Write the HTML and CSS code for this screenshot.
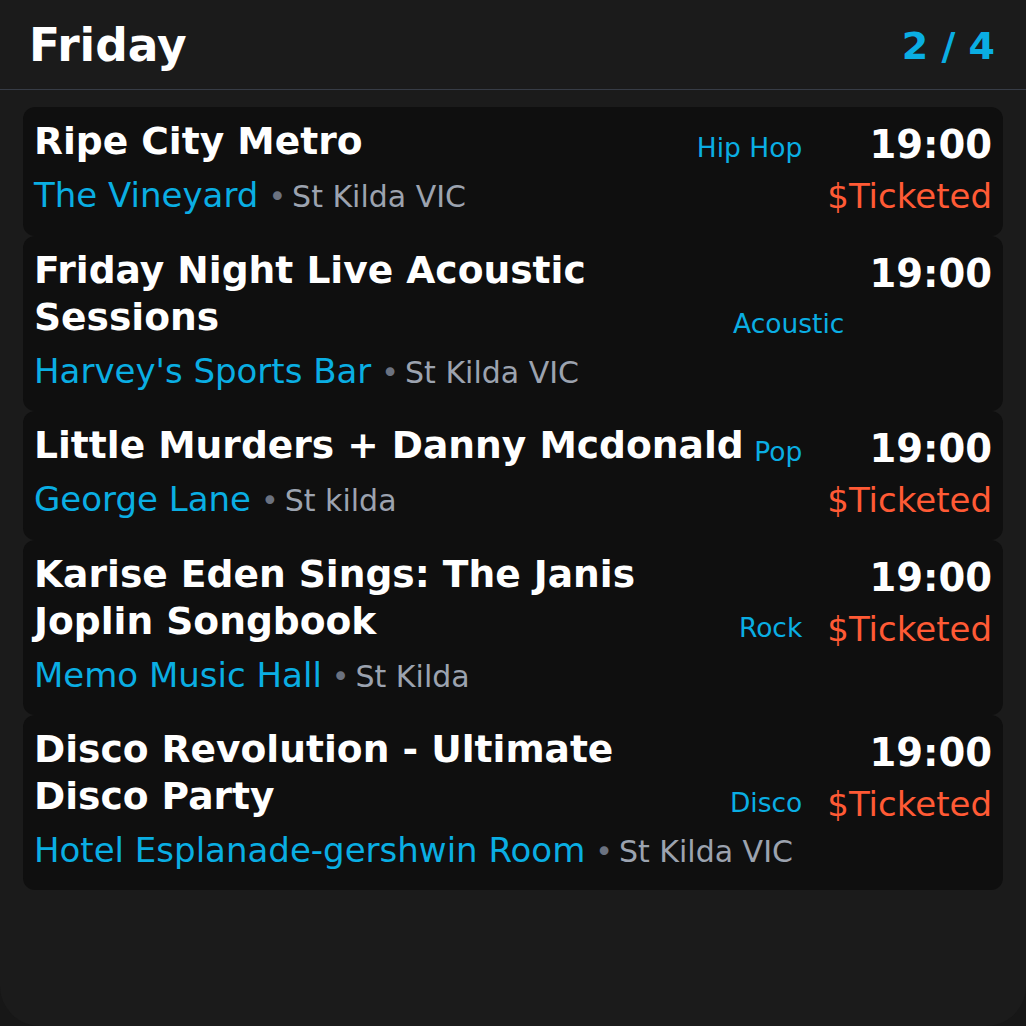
FILE: index.html
```html
<!DOCTYPE html>
<html lang="en">
<head>
<meta charset="utf-8">
<title>Friday</title>
<link rel="stylesheet" href="styles.css">
</head>
<body>
<div class="widget">
  <header class="head">
    <h1 class="day">Friday</h1>
    <span class="page">2 / 4</span>
  </header>
  <ul class="events">
    <li class="event">
      <div class="main">
        <div class="title-row"><span class="title">Ripe City Metro</span><span class="genre">Hip Hop</span></div>
        <div class="where"><span class="venue">The Vineyard</span><span class="dot">•</span><span class="loc">St Kilda VIC</span></div>
      </div>
      <div class="side"><span class="time">19:00</span><span class="price">$Ticketed</span></div>
    </li>
    <li class="event">
      <div class="main">
        <div class="title-row"><span class="title">Friday Night Live Acoustic Sessions</span><span class="genre">Acoustic</span></div>
        <div class="where"><span class="venue">Harvey's Sports Bar</span><span class="dot">•</span><span class="loc">St Kilda VIC</span></div>
      </div>
      <div class="side"><span class="time">19:00</span></div>
    </li>
    <li class="event">
      <div class="main">
        <div class="title-row"><span class="title">Little Murders + Danny Mcdonald</span><span class="genre">Pop</span></div>
        <div class="where"><span class="venue">George Lane</span><span class="dot">•</span><span class="loc">St kilda</span></div>
      </div>
      <div class="side"><span class="time">19:00</span><span class="price">$Ticketed</span></div>
    </li>
    <li class="event">
      <div class="main">
        <div class="title-row"><span class="title">Karise Eden Sings: The Janis Joplin Songbook</span><span class="genre">Rock</span></div>
        <div class="where"><span class="venue">Memo Music Hall</span><span class="dot">•</span><span class="loc">St Kilda</span></div>
      </div>
      <div class="side"><span class="time">19:00</span><span class="price">$Ticketed</span></div>
    </li>
    <li class="event">
      <div class="main">
        <div class="title-row"><span class="title">Disco Revolution - Ultimate Disco Party</span><span class="genre">Disco</span></div>
        <div class="where"><span class="venue">Hotel Esplanade-gershwin Room</span><span class="dot">•</span><span class="loc">St Kilda VIC</span></div>
      </div>
      <div class="side"><span class="time">19:00</span><span class="price">$Ticketed</span></div>
    </li>
  </ul>
</div>
</body>
</html>
```

FILE: styles.css
```css
* {
  box-sizing: border-box;
  margin: 0;
  padding: 0;
}

html, body {
  height: 100%;
}

body {
  background: #171717;
  font-family: "DejaVu Sans", "Liberation Sans", sans-serif;
}

.widget {
  height: 1026px;
  background: #1b1b1b;
  border-radius: 0 0 40px 40px;
  overflow: hidden;
}

.head {
  display: flex;
  justify-content: space-between;
  align-items: center;
  padding: 20px 31px 17px 29px;
  border-bottom: 1px solid #373c46;
}

.day {
  font-size: 45.5px;
  font-weight: 700;
  line-height: 52px;
  color: #ffffff;
}

.page {
  font-size: 38px;
  font-weight: 700;
  color: #0aaee3;
}

.events {
  list-style: none;
  display: flex;
  flex-direction: column;
  padding: 17px 23px 0;
}

.event {
  display: flex;
  align-items: flex-start;
  gap: 25px;
  background: #0f0f0f;
  border-radius: 12px;
  padding: 11px 11px 20px;
}

.main {
  flex: 1;
  min-width: 0;
}

.title-row {
  display: flex;
  align-items: flex-end;
  gap: 2px;
}

.title {
  flex: 1;
  min-width: 0;
  font-size: 37.6px;
  font-weight: 700;
  line-height: 47px;
  color: #ffffff;
}

.genre {
  flex-shrink: 0;
  font-size: 26.5px;
  line-height: 34px;
  color: #0aaee3;
}

.where {
  display: flex;
  align-items: baseline;
  margin-top: 10px;
  line-height: 40px;
  white-space: nowrap;
}

.venue {
  font-size: 34px;
  color: #0aaee3;
}

.dot {
  font-size: 30px;
  line-height: 30px;
  color: #6b7280;
  margin: 0 6px 0 10px;
}

.loc {
  font-size: 30px;
  line-height: 30px;
  color: #9ca3af;
}

.side {
  display: flex;
  flex-direction: column;
  align-items: flex-end;
  gap: 7px;
  padding-top: 3px;
  flex-shrink: 0;
}

.time {
  font-size: 38.5px;
  font-weight: 700;
  line-height: 48px;
  color: #ffffff;
}

.price {
  font-size: 34px;
  line-height: 40px;
  color: #ff5a35;
}
```
